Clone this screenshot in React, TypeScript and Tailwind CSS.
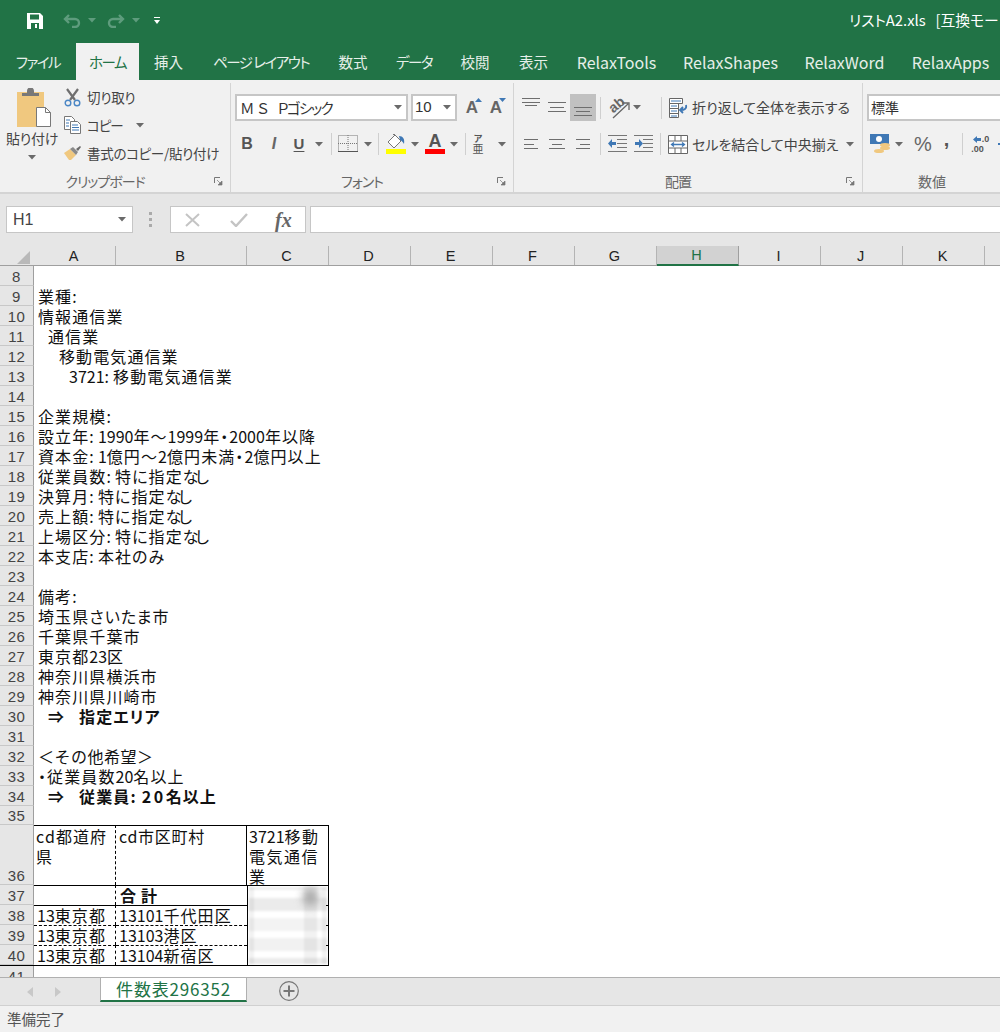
import type { ReactNode } from "react";

const jp = { fontFamily: '"Noto Sans CJK JP", sans-serif', fontFeatureSettings: '"palt"' };
const latin = { fontFamily: '"Liberation Sans", sans-serif' };

function Caret({ color = "#6a6a6a" }: { color?: string }) {
  return (
    <svg width="8" height="5" viewBox="0 0 8 5">
      <path d="M0 0h8L4 4.5z" fill={color} />
    </svg>
  );
}

function Sep({ className = "" }: { className?: string }) {
  return <div className={`h-[22px] w-px shrink-0 bg-[#cfcfcf] ${className}`} />;
}

function Expand() {
  return (
    <svg width="9" height="9" viewBox="0 0 9 9" className="absolute right-[7px] top-[6px]">
      <path d="M.5 6V.5H6" fill="none" stroke="#777" />
      <path d="M3 3l4 4M8 4v4H4z" fill="#777" stroke="#777" strokeWidth=".7" />
    </svg>
  );
}

function Group({ width, label, children }: { width: number; label: string; children: ReactNode }) {
  return (
    <div style={{ width }} className="relative flex h-[109px] shrink-0 flex-col border-r border-[#d4d4d4]">
      <div className="h-[88px] shrink-0">{children}</div>
      <div className="relative flex flex-1 items-center justify-center pr-[20px] text-[14px] tracking-[-1px] text-[#666]">
        {label}
        <Expand />
      </div>
    </div>
  );
}

function Lines({ ys, widths, align, h = 27 }: { ys: number[]; widths: number[]; align: "l" | "c" | "r"; h?: number }) {
  return (
    <svg width="26" height={h} viewBox={`0 0 26 ${h}`} className="shrink-0">
      {ys.map((y, i) => {
        const w = widths[i];
        const x = align === "l" ? 6 : align === "c" ? 13 - w / 2 : 20 - w;
        return <rect key={y} x={x} y={y} width={w} height="1" fill="#6e6e6e" />;
      })}
    </svg>
  );
}

function IndentIcon({ flip }: { flip?: boolean }) {
  return (
    <svg width="19" height="18" viewBox="0 0 19 18" className="shrink-0">
      <g fill="#777">
        <rect x="0" y="0" width="19" height="1" />
        <rect x="9" y="4" width="10" height="1" />
        <rect x="9" y="8" width="10" height="1" />
        <rect x="9" y="12" width="10" height="1" />
        <rect x="0" y="16" width="19" height="1" />
      </g>
      {flip ? (
        <path d="M1 7h4V4l4 4.5L5 13v-3H1z" fill="#3f78b5" />
      ) : (
        <path d="M8 7H4V4L0 8.5 4 13v-3h4z" fill="#3f78b5" />
      )}
    </svg>
  );
}

function Paste() {
  return (
    <svg width="36" height="40" viewBox="0 0 36 40">
      <rect x="0" y="4" width="27" height="35" fill="#f0c87f" />
      <path d="M5 8V5h5V3a3 3 0 0 1 7 0v2h5v3z" fill="#787878" />
      <path d="M19.5 19.5h9l5 5v14h-14z" fill="#fff" stroke="#787878" />
      <path d="M28.5 19.5v5h5" fill="none" stroke="#787878" />
    </svg>
  );
}

function ScissorsIcon() {
  return (
    <svg width="18" height="19" viewBox="0 0 18 19" className="shrink-0">
      <path d="M3 1l8 11M14 1L6 12" stroke="#6f6f6f" strokeWidth="2.2" fill="none" />
      <circle cx="4" cy="15" r="2.8" fill="none" stroke="#4a86c5" strokeWidth="1.4" />
      <circle cx="13" cy="15" r="2.8" fill="none" stroke="#4a86c5" strokeWidth="1.4" />
    </svg>
  );
}

function CopyIcon() {
  return (
    <svg width="18" height="18" viewBox="0 0 18 18" className="shrink-0">
      <path d="M.5.5h7l3 3v10H.5z" fill="#fff" stroke="#777" />
      <path d="M6.5 5.5h7l3 3v9h-10z" fill="#fff" stroke="#777" />
      <path d="M2 4h4M2 7h3M2 10h3M8 9h6M8 11.5h7M8 14h7" stroke="#3f78b5" />
    </svg>
  );
}

function BrushIcon() {
  return (
    <svg width="18" height="16" viewBox="0 0 18 16" className="shrink-0">
      <path d="M0 8l6-4 6 6-5 5H5z" fill="#f0c87f" />
      <path d="M6 4l3-2 5 5-2 3z" fill="#8a8a8a" />
      <path d="M12 4l4-3 1 1-3 4z" fill="#6a6a6a" />
    </svg>
  );
}

function AGrow({ down }: { down?: boolean }) {
  return (
    <div className="relative flex w-[24px] justify-center text-[17px] font-bold leading-[27px] text-[#666]">
      <span style={latin}>A</span>
      <svg width="7" height="4" viewBox="0 0 7 4" className="absolute right-[2px] top-[4px]">
        <path d={down ? "M0 0h7L3.5 4z" : "M0 4h7L3.5 0z"} fill="#3f78b5" />
      </svg>
    </div>
  );
}

function Clipboard() {
  return (
    <div className="flex h-full">
      <div className="flex w-[64px] flex-col items-center pt-[5px]">
        <div className="pl-[6px]">
          <Paste />
        </div>
        <span className="text-[14px] leading-[20px] tracking-[-0.3px] text-[#444]">貼り付け</span>
        <div className="mt-[7px]">
          <Caret />
        </div>
      </div>
      <div className="flex flex-col text-[13.5px] tracking-[-0.3px] text-[#444]">
        <div className="flex h-[28px] items-center gap-[5px]">
          <ScissorsIcon />
          切り取り
        </div>
        <div className="flex h-[28px] items-center gap-[5px]">
          <CopyIcon />
          <span className="tracking-[-1px]">コピー</span>
          <div className="ml-[8px]">
            <Caret />
          </div>
        </div>
        <div className="flex h-[28px] items-center gap-[5px]">
          <BrushIcon />
          書式のコピー/貼り付け
        </div>
      </div>
    </div>
  );
}

function Btn({ w, children, className = "" }: { w: number; children?: ReactNode; className?: string }) {
  return (
    <div style={{ width: w }} className={`flex shrink-0 items-center justify-center ${className}`}>
      {children}
    </div>
  );
}

function FontGroup() {
  return (
    <div className="flex h-full flex-col pl-[4px] pt-[11px]">
      <div className="flex h-[27px]">
        <div className="flex w-[173px] items-center justify-between border-2 border-[#c6c6c6] bg-white pl-[3px] pr-[4px] text-[14.5px] text-[#333]">
          <span>
            <span className="mr-[6px] tracking-[3px]">ＭＳ</span>
            <span className="tracking-[-1.5px]">Ｐゴシック</span>
          </span>
          <Caret />
        </div>
        <div className="ml-[3px] flex w-[46px] items-center justify-between border-2 border-[#c6c6c6] bg-white pl-[2px] pr-[4px] text-[15px] text-[#333]">
          <span style={latin}>10</span>
          <Caret />
        </div>
        <div className="ml-[3px] flex">
          <AGrow />
        </div>
        <AGrow down />
      </div>
      <div className="mt-[11px] flex h-[24px] items-center" style={latin}>
        <Btn w={24} className="text-[16px] font-bold text-[#555]">B</Btn>
        <Btn w={30} className="text-[16px] font-bold italic text-[#666]">I</Btn>
        <Btn w={20} className="text-[15px] font-bold text-[#555] underline underline-offset-2">U</Btn>
        <Btn w={20}><Caret /></Btn>
        <Sep className="ml-[2px]" />
        <svg width="20" height="18" viewBox="0 0 20 18" className="ml-[6px] shrink-0">
          <path d="M.5.5h19v16H.5zM10 0v17M0 8.5h20" stroke="#777" strokeDasharray="1 1" fill="none" />
          <path d="M0 16.5h20" stroke="#555" />
        </svg>
        <Btn w={20}><Caret /></Btn>
        <Sep />
        <div className="ml-[7px] flex w-[20px] shrink-0 flex-col items-center">
          <svg width="20" height="15" viewBox="0 0 20 15">
            <path d="M2 8l7-7 6 6-7 7z" fill="#fff" stroke="#777" />
            <path d="M7 1l1-1 3 3" fill="none" stroke="#777" />
            <path d="M13 2c4 0 6 3 5 8-1-2-2-3-4-4z" fill="#3f78b5" />
          </svg>
          <div className="h-[5px] w-[20px] bg-[#ffff00]" />
        </div>
        <Btn w={18}><Caret /></Btn>
        <div className="ml-[1px] flex w-[20px] shrink-0 flex-col items-center">
          <span className="h-[15px] text-[18px] font-bold leading-[15px] text-[#555]">A</span>
          <div className="h-[5px] w-[20px] bg-[#ff0000]" />
        </div>
        <Btn w={18}><Caret /></Btn>
        <Sep className="ml-[2px]" />
        <Btn w={24}>
          <div className="flex flex-col items-center text-[#555]" style={jp}>
            <span className="text-[9px] font-bold leading-[9px]">ア</span>
            <span className="text-[11px] leading-[11px]">亜</span>
          </div>
        </Btn>
        <Btn w={24}><Caret /></Btn>
      </div>
    </div>
  );
}

function Align() {
  return (
    <div className="flex h-full flex-col pl-[4px] pt-[11px] text-[14px] text-[#444]">
      <div className="flex h-[27px] items-center">
        <Lines ys={[4, 8, 11]} widths={[18, 18, 12]} align="c" />
        <Lines ys={[8, 13, 17]} widths={[18, 14, 18]} align="c" />
        <div className="bg-[#c1c1c1]">
          <Lines ys={[13, 17, 21]} widths={[18, 14, 18]} align="c" />
        </div>
        <Sep className="ml-[4px]" />
        <svg width="22" height="24" viewBox="0 0 22 24" className="ml-[7px] shrink-0">
          <text x="1" y="14" fontSize="14" fill="#666" fontFamily="Liberation Sans" fontWeight="700" transform="rotate(-40 8 10)">ab</text>
          <path d="M5 22L20 8M14 7h7v7" stroke="#666" strokeWidth="1.3" fill="none" />
        </svg>
        <Btn w={14}><Caret /></Btn>
        <Sep className="ml-[17px]" />
        <svg width="19" height="20" viewBox="0 0 19 20" className="ml-[7px] shrink-0">
          <path d="M.5.5h13v5H.5zM.5 5.5h9v14H.5zM.5 10.5h9M.5 15.5h9" fill="#fff" stroke="#666" />
          <path d="M2 3h10M2 8h6M2 13h6M2 18h6" stroke="#3f78b5" />
          <path d="M17 7c1 4-2 5-5 5M14 9l-3 3 3 3" stroke="#3f78b5" strokeWidth="1.8" fill="none" />
        </svg>
        <span className="ml-[4px] whitespace-nowrap">折り返して全体を表示する</span>
      </div>
      <div className="mt-[11px] flex h-[24px] items-center">
        <Lines ys={[7, 12, 16]} widths={[14, 10, 14]} align="l" h={24} />
        <Lines ys={[7, 12, 16]} widths={[16, 10, 16]} align="c" h={24} />
        <Lines ys={[7, 12, 16]} widths={[14, 10, 14]} align="r" h={24} />
        <Sep className="ml-[4px]" />
        <div className="ml-[7px] flex gap-[7px]">
          <IndentIcon />
          <IndentIcon flip />
        </div>
        <Sep className="ml-[7px]" />
        <svg width="20" height="19" viewBox="0 0 20 19" className="ml-[7px] shrink-0">
          <path d="M.5.5h19v18H.5zM.5 6h19M.5 13h19M7 .5V6M13 .5V6M7 13v5.5M13 13v5.5" fill="#fff" stroke="#666" />
          <path d="M4 9.5h12M6 7.5l-2.500 2 2.500 2M14 7.5l2.500 2-2.500 2" stroke="#3f78b5" fill="none" strokeWidth="1.3" />
        </svg>
        <span className="ml-[4px] whitespace-nowrap">セルを結合して中央揃え</span>
        <div className="ml-[8px]">
          <Caret />
        </div>
      </div>
    </div>
  );
}

function NumberGroup() {
  return (
    <div className="flex h-full flex-col pl-[4px] pt-[11px]" style={latin}>
      <div className="flex h-[27px] w-[160px] items-center border-2 border-[#c6c6c6] bg-white pl-[2px] text-[14px] text-[#333]" style={jp}>
        標準
      </div>
      <div className="mt-[11px] flex h-[24px] items-center">
        <svg width="21" height="20" viewBox="0 0 21 20" className="ml-[3px] shrink-0">
          <rect width="19" height="10" fill="#3f78b5" />
          <circle cx="9" cy="5" r="3" fill="#fff" />
          <ellipse cx="15" cy="11" rx="5" ry="2" fill="#f0c87f" />
          <ellipse cx="15" cy="14" rx="5" ry="2" fill="#f0c87f" />
          <ellipse cx="9" cy="17" rx="5" ry="2" fill="#f0c87f" />
        </svg>
        <Btn w={16}><Caret /></Btn>
        <span className="ml-[7px] text-[20px] text-[#666]">%</span>
        <span className="-mt-[10px] ml-[12px] text-[20px] font-bold leading-[15px] text-[#555]">,</span>
        <Sep className="ml-[13px]" />
        <div className="ml-[8px] flex w-[18px] shrink-0 flex-col text-[9px] font-bold leading-[10px] text-[#555]">
          <div className="flex items-center justify-end gap-[1px]">
            <svg width="8" height="7" viewBox="0 0 8 7"><path d="M0 3.5L4 0v2h4v3H4v2z" fill="#3f78b5" /></svg>
            .0
          </div>
          <span>.00</span>
        </div>
        <div className="ml-[9px] h-[2px] w-[6px] bg-[#3f78b5]" />
      </div>
    </div>
  );
}

const cols = [
  ["A", 82], ["B", 131], ["C", 82], ["D", 82], ["E", 82], ["F", 82],
  ["G", 82], ["H", 82], ["I", 82], ["J", 82], ["K", 82], ["L", 82],
] as const;

const rows: { n: number; text?: string; indent?: number; arrow?: boolean; full?: boolean }[] = [
  { n: 8 },
  { n: 9, text: "業種:" },
  { n: 10, text: "情報通信業" },
  { n: 11, text: "通信業", indent: 10 },
  { n: 12, text: "移動電気通信業", indent: 21 },
  { n: 13, text: "3721:移動電気通信業", indent: 31 },
  { n: 14 },
  { n: 15, text: "企業規模:" },
  { n: 16, text: "設立年:1990年〜1999年・2000年以降" },
  { n: 17, text: "資本金:1億円〜2億円未満・2億円以上" },
  { n: 18, text: "従業員数:特に指定なし" },
  { n: 19, text: "決算月:特に指定なし" },
  { n: 20, text: "売上額:特に指定なし" },
  { n: 21, text: "上場区分:特に指定なし" },
  { n: 22, text: "本支店:本社のみ" },
  { n: 23 },
  { n: 24, text: "備考:" },
  { n: 25, text: "埼玉県さいたま市" },
  { n: 26, text: "千葉県千葉市" },
  { n: 27, text: "東京都23区" },
  { n: 28, text: "神奈川県横浜市" },
  { n: 29, text: "神奈川県川崎市" },
  { n: 30, text: "指定エリア", indent: 10, arrow: true },
  { n: 31 },
  { n: 32, text: "\uFF1Cその他希望\uFF1E", full: true },
  { n: 33, text: "・従業員数20名以上" },
  { n: 34, text: "従業員:20名以上", indent: 10, arrow: true },
];

// MS P Gothic spacing: digits sit tight, colons get room, "なし" is narrow
function Txt({ s, bold }: { s: string; bold?: boolean }) {
  return (
    <>
      {s.split(/(\d+|:|なし)/).map((p, i) => {
        if (/^\d+$/.test(p)) return <span key={i} className={bold ? "tracking-[2.5px]" : "tracking-normal"}>{p}</span>;
        if (p === ":") return <span key={i} className={bold ? "mr-[5px]" : "mr-[3px]"}>{p}</span>;
        if (p === "なし") return <span key={i} className="tracking-[-3px]">{p}</span>;
        return <span key={i}>{p}</span>;
      })}
    </>
  );
}

function RowHead({ n, h = 20 }: { n: number; h?: number }) {
  return (
    <div
      style={{ height: h, ...latin }}
      className="flex w-[34px] shrink-0 items-end justify-center border-b border-r border-b-[#c8c8c8] border-r-[#9f9f9f] bg-[#e6e6e6] text-[15px] leading-[17px] tracking-[0.5px] text-[#444]"
    >
      {n}
    </div>
  );
}

const cellText = "whitespace-nowrap pl-[3px] text-[16px] tracking-[1.1px] text-[#111]";

function DataRow({ n, a, b, bold, top }: { n: number; a: string; b: string; bold?: boolean; top: string }) {
  return (
    <div className="flex h-[20px]">
      <RowHead n={n} />
      <div className={`flex h-[20px] w-[82px] items-end overflow-hidden border-r border-t border-r-black border-t-black [border-right-style:dashed] ${top} ${cellText} leading-[19px]`}>
        <Txt s={a} />
      </div>
      <div className={`flex h-[20px] w-[131px] items-end overflow-hidden border-t border-t-black ${top} ${cellText} leading-[19px] ${bold ? "pl-[4px] font-bold tracking-[5px]" : ""}`}>
        <Txt s={b} />
      </div>
    </div>
  );
}

function Blurred() {
  return (
    <div className="relative h-[81px] w-[82px] overflow-hidden border border-black bg-white">
      <div className="flex h-full flex-col px-[1px] py-[1px] blur-[1px]">
        <div className="h-[3px] bg-[#efefef]" />
        <div className="h-[8px] bg-white" />
        <div className="h-[13px] bg-[#ebebeb]" />
        <div className="h-[7px] bg-white" />
        <div className="h-[13px] bg-[#f3f3f3]" />
        <div className="h-[7px] bg-white" />
        <div className="h-[13px] bg-[#f1f1f1]" />
        <div className="h-[7px] bg-white" />
        <div className="h-[6px] bg-[#ebebeb]" />
      </div>
      <div className="absolute bottom-[1px] left-[1px] top-[1px] w-[5px] bg-black/5 blur-[1px]" />
      <div className="absolute bottom-[1px] left-[56px] top-[1px] w-[13px] bg-black/5 blur-[1px]" />
      <div className="absolute bottom-[1px] right-[1px] top-[1px] w-[5px] bg-black/5 blur-[1px]" />
      <div className="absolute left-[55px] top-[2px] h-[18px] w-[15px] rounded-full bg-[#aaaaaa] blur-[4px]" />
      <div className="absolute right-0 top-[19px] h-px w-[2px] bg-black" />
      <div className="absolute right-0 top-[39px] h-px w-[2px] bg-black" />
      <div className="absolute right-0 top-[59px] h-px w-[2px] bg-black" />
    </div>
  );
}

function Sheet() {
  return (
    <div className="h-[711px] shrink-0 overflow-hidden bg-white" style={jp}>
      {rows.map(({ n, text, indent, arrow, full }) => (
        <div key={n} className="flex h-[20px]">
          <RowHead n={n} />
          <div
            style={{ paddingLeft: 4 + (indent ?? 0), fontFeatureSettings: full ? "normal" : undefined }}
            className={`whitespace-nowrap text-[16px] leading-[21px] ${full ? "tracking-[0.5px]" : "tracking-[1.1px]"} text-[#111] ${arrow ? "font-bold" : ""}`}
          >
            {arrow && <span className="mr-[14px]">⇒</span>}
            {text && <Txt s={text} bold={arrow} />}
          </div>
        </div>
      ))}
      <div className="flex h-[19px]">
        <RowHead n={35} h={19} />
      </div>

      <div className="flex h-[60px]">
        <RowHead n={36} h={60} />
        <div className="h-[60px] w-[82px] overflow-hidden whitespace-pre-line border-r border-t border-r-black border-t-black pl-[2px] text-[16px] leading-[20px] tracking-[1.1px] text-[#111] [border-right-style:dashed]">
          {"cd都道府\n県"}
        </div>
        <div className="h-[60px] w-[131px] overflow-hidden border-r border-t border-black pl-[3px] text-[16px] leading-[20px] tracking-[0.7px] text-[#111]">
          cd市区町村
        </div>
        <div className="h-[60px] w-[82px] overflow-hidden whitespace-pre-line border-r border-t border-black pl-[2px] text-[16px] leading-[20px] tracking-[1.5px] text-[#111]">
          <span className="tracking-normal">3721</span>
          {"移動\n電気通信\n業"}
        </div>
      </div>
      <div className="flex">
        <div className="flex flex-col border-b border-black">
          <DataRow n={37} a="" b="合計" bold top="[border-top-style:solid]" />
          <DataRow n={38} a="13東京都" b="13101千代田区" top="[border-top-style:solid]" />
          <DataRow n={39} a="13東京都" b="13103港区" top="[border-top-style:dashed]" />
          <DataRow n={40} a="13東京都" b="13104新宿区" top="[border-top-style:dashed]" />
        </div>
        <Blurred />
      </div>
      <RowHead n={41} />
    </div>
  );
}

export default function App() {
  const tabs: [string, number][] = [
    ["ファイル", 76], ["ホーム", 63], ["挿入", 59], ["ページ レイアウト", 126], ["数式", 58], ["データ", 64],
    ["校閲", 58], ["表示", 59], ["RelaxTools", 107], ["RelaxShapes", 121], ["RelaxWord", 107], ["RelaxApps", 105],
  ];
  return (
    <div className="h-[1032px] w-[1000px] overflow-hidden bg-[#f1f1f1]" style={jp}>
      <div className="flex h-[43px] items-center overflow-hidden whitespace-nowrap bg-[#217346] pb-[2px] pl-[27px]">
        <svg width="16" height="16" viewBox="0 0 16 16" className="shrink-0">
          <path d="M0 0h13l3 3v13H0z" fill="#fff" />
          <rect x="3" y="1.5" width="9" height="5" fill="#217346" />
          <rect x="4" y="10" width="8" height="6" fill="#217346" />
          <rect x="8" y="11" width="2" height="4" fill="#fff" />
        </svg>
        <svg width="18" height="14" viewBox="0 0 18 14" className="ml-[20px] shrink-0">
          <path d="M6 1L2 5l4 4M2 5h10a4 4 0 0 1 0 8H9" fill="none" stroke="#5e9c7d" strokeWidth="2.4" />
        </svg>
        <div className="ml-[7px]"><Caret color="#5e9c7d" /></div>
        <svg width="18" height="14" viewBox="0 0 18 14" className="ml-[11px] shrink-0">
          <path d="M12 1l4 4-4 4M16 5H6a4 4 0 0 0 0 8h3" fill="none" stroke="#5e9c7d" strokeWidth="2.4" />
        </svg>
        <div className="ml-[7px]"><Caret color="#5e9c7d" /></div>
        <svg width="6" height="7" viewBox="0 0 6 7" className="ml-[14px] shrink-0">
          <path d="M0 0h6v1H0zM0 3h6L3 7z" fill="#fff" />
        </svg>
        <span className="ml-[689px] text-[14.8px] text-white">リストA2.xls&nbsp;&nbsp;&nbsp;[互換モード]&nbsp;-&nbsp;Excel</span>
      </div>

      <div className="flex h-[37px] overflow-hidden whitespace-nowrap bg-[#217346]">
        {tabs.map(([t, w]) => (
          <div
            key={t}
            style={{ width: w }}
            className={`flex shrink-0 items-center justify-center ${t.startsWith("Relax") ? "text-[16px]" : /[ァ-ヶ]/.test(t) ? "text-[14.5px] tracking-[-1.5px]" : "text-[14.5px]"} ${t === "ホーム" ? "bg-[#f1f1f1] text-[#217346]" : "text-[#e6efe9]"}`}
          >
            {t}
          </div>
        ))}
      </div>

      <div className="flex h-[114px] overflow-hidden border-b-2 border-[#d4d4d4] pt-[3px]">
        <Group width={231} label="クリップボード"><Clipboard /></Group>
        <Group width={283} label="フォント"><FontGroup /></Group>
        <Group width={349} label="配置"><Align /></Group>
        <div className="relative flex h-[109px] flex-1 flex-col">
          <div className="h-[88px]"><NumberGroup /></div>
          <div className="flex flex-1 items-center pl-[55px] text-[14px] text-[#666]">数値</div>
        </div>
      </div>

      <div className="flex h-[52px] items-center bg-[#e6e6e6] pb-[1px]" style={latin}>
        <div className="ml-[6px] flex h-[27px] w-[127px] items-center justify-between border border-[#c6c6c6] bg-white pl-[6px] pr-[6px] text-[16px] text-[#444]">
          H1
          <Caret />
        </div>
        <div className="ml-[16px] flex w-[4px] flex-col gap-[3px]">
          <div className="h-[3px] w-[3px] bg-[#aaa]" />
          <div className="h-[3px] w-[3px] bg-[#aaa]" />
          <div className="h-[3px] w-[3px] bg-[#aaa]" />
        </div>
        <div className="ml-[17px] flex h-[27px] w-[136px] items-center border border-[#c6c6c6] bg-white pl-[14px]">
          <svg width="15" height="14" viewBox="0 0 15 14" className="shrink-0"><path d="M1 1l13 12M14 1L1 13" stroke="#c4c4c4" strokeWidth="2" /></svg>
          <svg width="18" height="14" viewBox="0 0 18 14" className="ml-[30px] shrink-0"><path d="M1 8l5 5L17 1" stroke="#c4c4c4" strokeWidth="2.4" fill="none" /></svg>
          <span className="ml-[27px] text-[20px] font-bold italic leading-[20px] text-[#666]" style={{ fontFamily: '"Liberation Serif", serif' }}>fx</span>
        </div>
        <div className="ml-[4px] h-[27px] flex-1 border-y border-l border-[#c6c6c6] bg-white" />
      </div>

      <div className="flex h-[20px] border-b border-[#9f9f9f] bg-[#e6e6e6]" style={latin}>
        <div className="flex w-[34px] shrink-0 items-end justify-end pb-[1px] pr-[4px]">
          <svg width="13" height="13" viewBox="0 0 13 13"><path d="M13 0v13H0z" fill="#b9b9b9" /></svg>
        </div>
        {cols.map(([c, w]) => (
          <div
            key={c}
            style={{ width: w }}
            className={`flex shrink-0 items-end justify-center border-r pr-[2px] text-[14.5px] leading-[18px] ${c === "H" ? "-mb-px border-b-2 border-b-[#217346] border-r-[#9f9f9f] bg-[#d2d2d2] text-[#217346]" : "border-r-[#b4b4b4] text-[#222]"}`}
          >
            {c}
          </div>
        ))}
      </div>

      <Sheet />

      <div className="flex h-[28px] border-t border-[#b0b0b0] bg-[#e6e6e6]">
        <div className="flex w-[100px] shrink-0 items-center gap-[22px] pl-[27px]">
          <svg width="6" height="10" viewBox="0 0 6 10"><path d="M6 0v10L0 5z" fill="#c8c8c8" /></svg>
          <svg width="6" height="10" viewBox="0 0 6 10"><path d="M0 0v10l6-5z" fill="#c8c8c8" /></svg>
        </div>
        <div className="flex h-[24px] w-[147px] items-center justify-center border-x border-b-2 border-x-[#b0b0b0] border-b-[#217346] bg-white pb-[1px] text-[17px] tracking-[0.8px] text-[#217346]">
          件数表296352
        </div>
        <svg width="20" height="20" viewBox="0 0 20 20" className="ml-[32px] mt-[3px]">
          <circle cx="10" cy="10" r="9.3" fill="none" stroke="#777" strokeWidth="1.2" />
          <path d="M10 4.5v11M4.5 10h11" stroke="#777" strokeWidth="2" />
        </svg>
      </div>

      <div className="flex h-[27px] items-center border-t border-[#d0d0d0] pl-[7px] text-[14.5px] text-[#555]">準備完了</div>
    </div>
  );
}
